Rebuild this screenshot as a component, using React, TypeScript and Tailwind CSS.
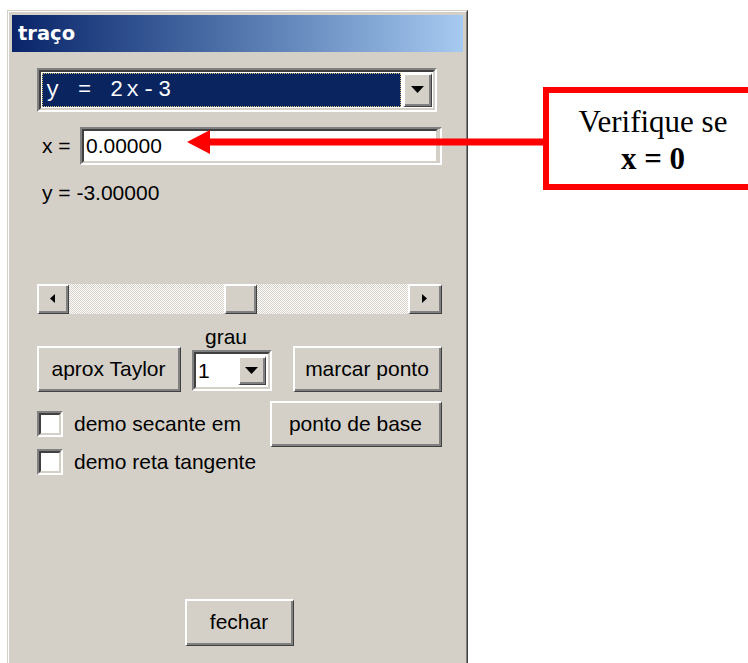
import type { ReactNode } from 'react';

const ui = "font-['Liberation_Sans',Arial,sans-serif] text-[21px] text-black";

// classic 3D bevels
function Raised({ className = '', children }: { className?: string; children?: ReactNode }) {
  return (
    <div
      className={`border-t-2 border-l-2 border-r border-b border-t-white border-l-white border-r-[#404040] border-b-[#404040] bg-[#d4d0c8] ${className}`}
    >
      <div className="flex h-full w-full items-center justify-center border-r-2 border-b-2 border-r-[#808080] border-b-[#808080]">
        {children}
      </div>
    </div>
  );
}

function Sunken({
  className = '',
  inner = '',
  children,
}: {
  className?: string;
  inner?: string;
  children?: ReactNode;
}) {
  return (
    <div className={`border-2 border-t-[#808080] border-l-[#808080] border-r-white border-b-white ${className}`}>
      <div
        className={`h-full w-full border-2 border-t-[#404040] border-l-[#404040] border-r-[#d4d0c8] border-b-[#d4d0c8] bg-white ${inner}`}
      >
        {children}
      </div>
    </div>
  );
}

function DownArrow() {
  return (
    <svg width="13" height="7" viewBox="0 0 13 7">
      <path d="M0 0h13L6.5 7z" fill="#000" />
    </svg>
  );
}

function SideArrow({ dir }: { dir: 'left' | 'right' }) {
  return (
    <svg width="5" height="9" viewBox="0 0 5 9">
      <path d={dir === 'left' ? 'M5 0v9L0 4.5z' : 'M0 0v9l5-4.5z'} fill="#000" />
    </svg>
  );
}

const dither =
  'bg-[repeating-conic-gradient(#d4d0c8_0%_25%,#ffffff_0%_50%)] bg-[length:2px_2px]';

function Checkbox({ label }: { label: string }) {
  return (
    <div className="flex items-center">
      <Sunken className="h-[26px] w-[26px] shrink-0" />
      <span className="ml-[11px] whitespace-nowrap">{label}</span>
    </div>
  );
}

export default function App() {
  return (
    <div className="relative h-[663px] w-[748px] overflow-hidden bg-white">
      {/* window frame */}
      <div className="ml-[7px] mt-[10px] h-[700px] w-[461px] border border-t-[#d4d0c8] border-l-[#d4d0c8] border-r-[#404040] border-b-[#404040] bg-[#d4d0c8]">
        <div className="h-full w-full border border-t-white border-l-white border-r-[#808080] border-b-[#808080] px-[3px] pt-[3px]">
          {/* title bar */}
          <div className="flex h-[37px] items-center bg-gradient-to-r from-[#0a246a] to-[#a6caf0] pl-[6px]">
            <span className="font-['DejaVu_Sans',Verdana,sans-serif] text-[19.5px] font-bold text-white">traço</span>
          </div>

          {/* body */}
          <div className={`flex flex-col pl-[25px] pr-[21px] ${ui}`}>
            {/* function picker */}
            <Sunken className="mt-[16px] h-[44px] w-[400px]" inner="flex items-stretch p-[1px]">
              <div className="flex flex-1 items-center border border-dotted border-[#d8c27a] bg-[#0a2460] pl-[3px]">
                <span className="whitespace-pre font-['Liberation_Mono','Courier_New',monospace] text-[22px] tracking-[2.8px] text-white">
                  y = 2x-3
                </span>
              </div>
              <Raised className="ml-[2px] w-[29px]">
                <DownArrow />
              </Raised>
            </Sunken>

            <div className="mt-[15px] flex items-center">
              <span className="w-[43px] pl-[5px]">x =</span>
              <Sunken className="h-[38px] flex-1 pr-[2px]" inner="flex items-center pl-[2px]">
                0.00000
              </Sunken>
            </div>

            <div className="ml-[5px] mt-[16px] leading-[24px]">y = -3.00000</div>

            {/* horizontal scrollbar */}
            <div className="mt-[79px] flex h-[30px]">
              <Raised className="w-[32px]">
                <SideArrow dir="left" />
              </Raised>
              <div className={`w-[155px] ${dither}`} />
              <Raised className="w-[33px]" />
              <div className={`flex-1 ${dither}`} />
              <Raised className="w-[34px]">
                <SideArrow dir="right" />
              </Raised>
            </div>

            <div className="mt-[14px] flex items-end">
              <Raised className="h-[46px] w-[144px]">aprox Taylor</Raised>
              <div className="ml-[11px] flex w-[80px] flex-col items-center">
                <span className="mr-[12px] leading-[18px]">grau</span>
                <Sunken className="mb-[1px] mt-[4px] h-[41px] w-[80px]" inner="flex items-stretch">
                  <span className="flex flex-1 items-center pl-[2px]">1</span>
                  <Raised className="my-[2px] mr-[2px] w-[28px]">
                    <DownArrow />
                  </Raised>
                </Sunken>
              </div>
              <Raised className="ml-[21px] h-[46px] w-[149px]">marcar ponto</Raised>
            </div>

            <div className="mt-[9px] flex h-[46px] items-center justify-between">
              <Checkbox label="demo secante em" />
              <Raised className="h-[46px] w-[172px]">ponto de base</Raised>
            </div>
            <div className="flex h-[30px] items-center">
              <Checkbox label="demo reta tangente" />
            </div>

            <Raised className="mt-[122px] h-[47px] w-[109px] self-center">fechar</Raised>
          </div>
        </div>
      </div>

      {/* annotation arrow */}
      <svg className="absolute left-[185px] top-[128px]" width="360" height="28" viewBox="0 0 360 28">
        <path d="M2 14L25 2V26z" fill="#ff0000" />
        <rect x="24" y="10.5" width="336" height="7" fill="#ff0000" />
      </svg>

      {/* annotation box */}
      <div className="absolute left-[543px] top-[87px] flex h-[103px] w-[220px] flex-col items-center border-[6px] border-[#ff0000] bg-white pt-[10px] font-['Liberation_Serif','Times_New_Roman',serif] text-[31px] leading-[37px] text-black">
        <span>Verifique se</span>
        <span className="font-bold">x = 0</span>
      </div>
    </div>
  );
}
